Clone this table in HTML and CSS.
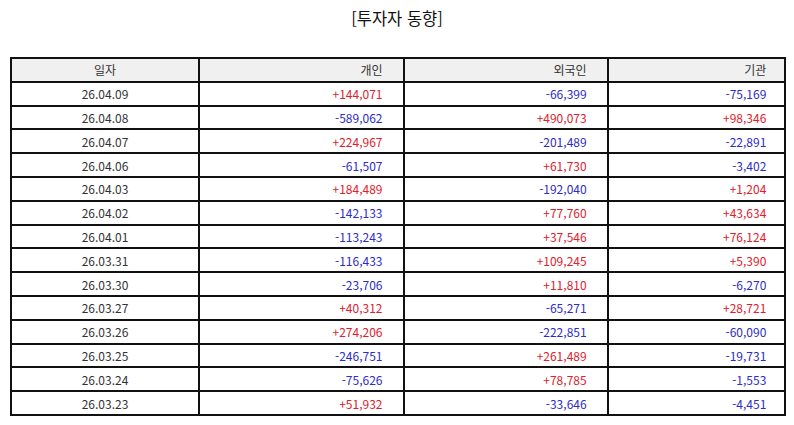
FILE: index.html
```html
<!DOCTYPE html>
<html lang="ko">
<head>
<meta charset="utf-8">
<title>투자자 동향</title>
<link rel="stylesheet" href="styles.css">
</head>
<body>
<h1 class="title">[투자자 동향]</h1>
<table class="grid">
<colgroup><col class="c1"><col class="c2"><col class="c3"><col class="c4"></colgroup>
<thead>
<tr><th class="date">일자</th><th>개인</th><th>외국인</th><th>기관</th></tr>
</thead>
<tbody>
<tr><td class="date">26.04.09</td><td class="up">+144,071</td><td class="dn">-66,399</td><td class="dn">-75,169</td></tr>
<tr><td class="date">26.04.08</td><td class="dn">-589,062</td><td class="up">+490,073</td><td class="up">+98,346</td></tr>
<tr><td class="date">26.04.07</td><td class="up">+224,967</td><td class="dn">-201,489</td><td class="dn">-22,891</td></tr>
<tr><td class="date">26.04.06</td><td class="dn">-61,507</td><td class="up">+61,730</td><td class="dn">-3,402</td></tr>
<tr><td class="date">26.04.03</td><td class="up">+184,489</td><td class="dn">-192,040</td><td class="up">+1,204</td></tr>
<tr><td class="date">26.04.02</td><td class="dn">-142,133</td><td class="up">+77,760</td><td class="up">+43,634</td></tr>
<tr><td class="date">26.04.01</td><td class="dn">-113,243</td><td class="up">+37,546</td><td class="up">+76,124</td></tr>
<tr><td class="date">26.03.31</td><td class="dn">-116,433</td><td class="up">+109,245</td><td class="up">+5,390</td></tr>
<tr><td class="date">26.03.30</td><td class="dn">-23,706</td><td class="up">+11,810</td><td class="dn">-6,270</td></tr>
<tr><td class="date">26.03.27</td><td class="up">+40,312</td><td class="dn">-65,271</td><td class="up">+28,721</td></tr>
<tr><td class="date">26.03.26</td><td class="up">+274,206</td><td class="dn">-222,851</td><td class="dn">-60,090</td></tr>
<tr><td class="date">26.03.25</td><td class="dn">-246,751</td><td class="up">+261,489</td><td class="dn">-19,731</td></tr>
<tr><td class="date">26.03.24</td><td class="dn">-75,626</td><td class="up">+78,785</td><td class="dn">-1,553</td></tr>
<tr><td class="date">26.03.23</td><td class="up">+51,932</td><td class="dn">-33,646</td><td class="dn">-4,451</td></tr>
</tbody>
</table>
</body>
</html>
```
FILE: styles.css
```css
html, body {
  margin: 0;
  padding: 0;
  background: #ffffff;
}
body {
  font-family: "Noto Sans CJK KR", "Noto Sans", sans-serif;
  color: #222;
}
.title {
  margin: 0;
  padding-top: 6px;
  height: 57px;
  box-sizing: border-box;
  text-align: center;
  font-size: 16.5px;
  font-weight: normal;
  line-height: 24px;
  color: #111;
}
.grid {
  margin-left: 10px;
  width: 774px;
  table-layout: fixed;
  border-collapse: collapse;
  font-size: 12px;
}
.c1 { width: 188px; }
.c2 { width: 205px; }
.c3 { width: 204px; }
.c4 { width: 177px; }
.grid th, .grid td {
  border: 2px solid #111;
  height: 23.8px;
  padding: 0;
  text-align: right;
  font-weight: normal;
  line-height: 15px;
  box-sizing: border-box;
  color: #333;
}
.grid th:nth-child(2), .grid td:nth-child(2) { padding-right: 20.5px; }
.grid th:nth-child(3), .grid td:nth-child(3) { padding-right: 20.4px; }
.grid th:nth-child(4), .grid td:nth-child(4) { padding-right: 17.7px; }
.grid th {
  background: #f0f0f0;
}
.grid .date {
  text-align: center;
  padding: 0;
}
.grid .up { color: #e0202c; }
.grid .dn { color: #2c2cc8; }
```
